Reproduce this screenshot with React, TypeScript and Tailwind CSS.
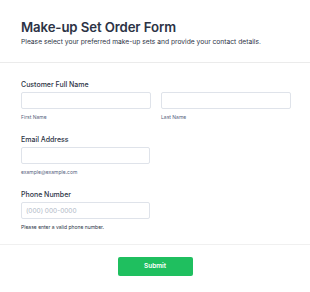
export default function App() {
  return (
    <div className="w-[310px] h-[292px] bg-white overflow-hidden font-['Inter',sans-serif]">
      {/* Header */}
      <div className="px-[21px] pt-[19px] pb-[16px] border-b border-[#ebebeb]">
        <h1 className="text-[13.2px] leading-[16px] font-semibold text-[#2c3345] tracking-[-0.1px]">
          Make-up Set Order Form
        </h1>
        <p className="mt-[3px] text-[6.7px] leading-[8px] text-[#2c3345]">
          Please select your preferred make-up sets and provide your contact details.
        </p>
      </div>

      {/* Fields */}
      <div className="px-[21px] pt-[17px] pb-[14px] border-b border-[#f0f0f0]">
        <div className="text-[7px] leading-[10px] font-medium text-[#2c3345]">Customer Full Name</div>
        <div className="mt-[2px] flex gap-[10px]">
          <div className="flex flex-col w-[130px]">
            <input className="h-[17px] border border-[#dfe3ea] rounded-[2px] bg-white" />
            <span className="mt-[5px] text-[5px] leading-[6px] text-[#57647e]">First Name</span>
          </div>
          <div className="flex flex-col w-[130px]">
            <input className="h-[17px] border border-[#dfe3ea] rounded-[2px] bg-white" />
            <span className="mt-[5px] text-[5px] leading-[6px] text-[#57647e]">Last Name</span>
          </div>
        </div>

        <div className="mt-[15px] text-[7px] leading-[10px] font-medium text-[#2c3345]">Email Address</div>
        <div className="mt-[2px] flex flex-col w-[129px]">
          <input className="h-[17px] border border-[#dfe3ea] rounded-[2px] bg-white" />
          <span className="mt-[5px] text-[5px] leading-[6px] text-[#57647e]">example@example.com</span>
        </div>

        <div className="mt-[15px] text-[7px] leading-[10px] font-medium text-[#2c3345]">Phone Number</div>
        <div className="mt-[2px] flex flex-col w-[129px]">
          <input
            placeholder="(000) 000-0000"
            className="h-[17px] px-[4px] border border-[#dfe3ea] rounded-[2px] bg-white text-[6.5px] placeholder:text-[#b0b8c6] outline-none"
          />
          <span className="mt-[5px] text-[5px] leading-[6px] text-[#2c3345]">Please enter a valid phone number.</span>
        </div>
      </div>

      {/* Submit */}
      <div className="flex justify-center pt-[12px]">
        <button className="w-[75px] h-[19px] rounded-[2px] bg-[#1fbf5f] text-white text-[6.5px] font-semibold">
          Submit
        </button>
      </div>
    </div>
  )
}
